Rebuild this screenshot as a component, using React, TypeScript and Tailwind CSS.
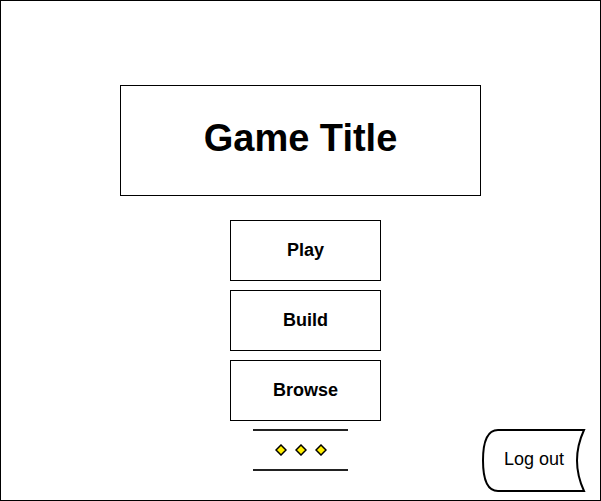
import React from 'react';

const font = { fontFamily: '"Liberation Sans", Arial, sans-serif' };

function MenuButton({ label }: { label: string }) {
    return (
        <div className="w-[151px] h-[61px] border border-black flex items-center justify-center pb-[2px] text-[18px] font-bold text-black leading-none">
            {label}
        </div>
    );
}

function Diamond() {
    return (
        <svg width="12" height="12" viewBox="0 0 12 12">
            <path d="M6 1 L11 6 L6 11 L1 6 Z" fill="#ffee00" stroke="#000" strokeWidth="1.5" />
        </svg>
    );
}

function LogoutButton() {
    return (
        <div className="relative w-[104px] h-[63px] flex items-center justify-center">
            <svg className="absolute inset-0" width="104" height="63" viewBox="0 0 104 63">
                <path
                    d="M16 1 L102 1 Q 88 31.5 102 62 L16 62 Q 1 62 1 31.5 Q 1 1 16 1 Z"
                    fill="#fff"
                    stroke="#000"
                    strokeWidth="2"
                />
            </svg>
            <span className="relative text-[18px] text-black pb-[2px]">Log out</span>
        </div>
    );
}

export default function App() {
    return (
        <div className="w-[601px] h-[501px] border border-black bg-white flex flex-col items-center" style={font}>
            {/* Title */}
            <div className="mt-[84px] w-[361px] h-[111px] border border-black flex items-center justify-center pb-[5px]">
                <h1 className="text-[38px] font-bold text-black leading-none">Game Title</h1>
            </div>

            {/* Menu */}
            <div className="mt-[24px] ml-[10px] flex flex-col gap-[9px]">
                <MenuButton label="Play" />
                <MenuButton label="Build" />
                <MenuButton label="Browse" />
            </div>

            {/* Footer row */}
            <div className="mt-[8px] w-full grid grid-cols-[1fr_auto_1fr]">
                <div />
                <div className="w-[95px] flex flex-col">
                    <div className="h-[2px] bg-[#222]" />
                    <div className="h-[38px] flex items-center justify-center gap-[8px] pl-[1px]">
                        <Diamond />
                        <Diamond />
                        <Diamond />
                    </div>
                    <div className="h-[2px] bg-[#222]" />
                </div>
                <div className="flex justify-end pr-[14px]">
                    <LogoutButton />
                </div>
            </div>
        </div>
    );
}
